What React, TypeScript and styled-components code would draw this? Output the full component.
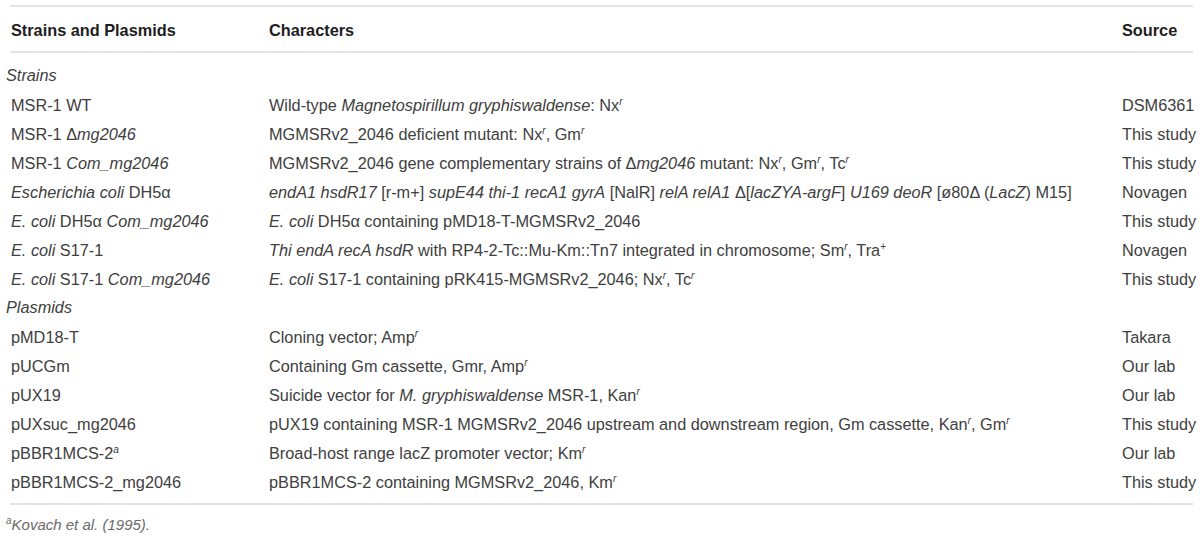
import React from "react";
import styled, { createGlobalStyle } from "styled-components";

const Global = createGlobalStyle`
  html, body { margin: 0; padding: 0; background: #ffffff; }
  body { font-family: "Liberation Sans", Arial, Helvetica, sans-serif; }
`;

const Page = styled.div`
  padding: 5px 7px 0 10px;
`;

const Table = styled.table`
  width: 1183px;
  border-collapse: collapse;
  table-layout: fixed;
  border-top: 2px solid #e3e3e3;
  border-bottom: 2px solid #e3e3e3;
  font-size: 16.3px;
  color: #404040;
`;

const HeadRow = styled.tr`
  height: 46px;
  border-bottom: 2px solid #e3e3e3;
`;

const HeadCell = styled.th`
  text-align: left;
  font-weight: bold;
  color: #1e1e1e;
  padding: 3px 0 0 1px;
  vertical-align: middle;
  white-space: nowrap;
`;

const Spacer = styled.tr<{ $h: number }>`
  height: ${(p) => p.$h}px;
`;

const Row = styled.tr`
  height: 29px;
`;

const Cell = styled.td`
  padding: 0 0 0 1px;
  vertical-align: middle;
  white-space: nowrap;
  line-height: 18px;
`;

const SectionCell = styled.td`
  padding: 0;
  text-indent: -4px;
  font-style: italic;
  vertical-align: middle;
  white-space: nowrap;
`;

const I = styled.i`
  font-style: italic;
`;

const Sup = styled.sup`
  font-size: 10px;
  line-height: 0;
  vertical-align: 6px;
`;

const Footnote = styled.div`
  margin-top: 10px;
  margin-left: -4px;
  font-size: 15px;
  line-height: 20px;
  font-style: italic;
  color: #6a6a6a;
`;

type RowData = { a: React.ReactNode; b: React.ReactNode; c: string };

const R = () => <Sup><I>r</I></Sup>;

const strains: RowData[] = [
  { a: "MSR-1 WT", b: <>Wild-type <I>Magnetospirillum gryphiswaldense</I>: Nx<R /></>, c: "DSM6361" },
  { a: <>MSR-1 Δ<I>mg2046</I></>, b: <>MGMSRv2_2046 deficient mutant: Nx<R />, Gm<R /></>, c: "This study" },
  { a: <>MSR-1 <I>Com_mg2046</I></>, b: <>MGMSRv2_2046 gene complementary strains of Δ<I>mg2046</I> mutant: Nx<R />, Gm<R />, Tc<R /></>, c: "This study" },
  {
    a: <><I>Escherichia coli</I> DH5α</>,
    b: <><I>endA1 hsdR17</I> [r-m+] <I>supE44 thi-1 recA1 gyrA</I> [NalR] <I>relA relA1</I> Δ[<I>lacZYA-argF</I>] <I>U169 deoR</I> [ø80Δ (<I>LacZ</I>) M15]</>,
    c: "Novagen",
  },
  { a: <><I>E. coli</I> DH5α <I>Com_mg2046</I></>, b: <><I>E. coli</I> DH5α containing pMD18-T-MGMSRv2_2046</>, c: "This study" },
  { a: <><I>E. coli</I> S17-1</>, b: <><I>Thi endA recA hsdR</I> with RP4-2-Tc::Mu-Km::Tn7 integrated in chromosome; Sm<R />, Tra<Sup>+</Sup></>, c: "Novagen" },
  { a: <><I>E. coli</I> S17-1 <I>Com_mg2046</I></>, b: <><I>E. coli</I> S17-1 containing pRK415-MGMSRv2_2046; Nx<R />, Tc<R /></>, c: "This study" },
];

const plasmids: RowData[] = [
  { a: "pMD18-T", b: <>Cloning vector; Amp<R /></>, c: "Takara" },
  { a: "pUCGm", b: <>Containing Gm cassette, Gmr, Amp<R /></>, c: "Our lab" },
  { a: "pUX19", b: <>Suicide vector for <I>M. gryphiswaldense</I> MSR-1, Kan<R /></>, c: "Our lab" },
  { a: "pUXsuc_mg2046", b: <>pUX19 containing MSR-1 MGMSRv2_2046 upstream and downstream region, Gm cassette, Kan<R />, Gm<R /></>, c: "This study" },
  { a: <>pBBR1MCS-2<Sup><I>a</I></Sup></>, b: <>Broad-host range lacZ promoter vector; Km<R /></>, c: "Our lab" },
  { a: "pBBR1MCS-2_mg2046", b: <>pBBR1MCS-2 containing MGMSRv2_2046, Km<R /></>, c: "This study" },
];

const renderRows = (rows: RowData[], key: string) =>
  rows.map((r, i) => (
    <Row key={key + i}>
      <Cell>{r.a}</Cell>
      <Cell>{r.b}</Cell>
      <Cell>{r.c}</Cell>
    </Row>
  ));

export default function App() {
  return (
    <Page>
      <Global />
      <Table>
        <colgroup>
          <col style={{ width: 258 }} />
          <col style={{ width: 853 }} />
          <col style={{ width: 72 }} />
        </colgroup>
        <thead>
          <HeadRow>
            <HeadCell>Strains and Plasmids</HeadCell>
            <HeadCell>Characters</HeadCell>
            <HeadCell>Source</HeadCell>
          </HeadRow>
        </thead>
        <tbody>
          <Spacer $h={9} />
          <Row>
            <SectionCell colSpan={3}>Strains</SectionCell>
          </Row>
          {renderRows(strains, "s")}
          <Row>
            <SectionCell colSpan={3}>Plasmids</SectionCell>
          </Row>
          {renderRows(plasmids, "p")}
          <Spacer $h={8} />
        </tbody>
      </Table>
      <Footnote>
        <Sup>a</Sup>Kovach et al. (1995).
      </Footnote>
    </Page>
  );
}
